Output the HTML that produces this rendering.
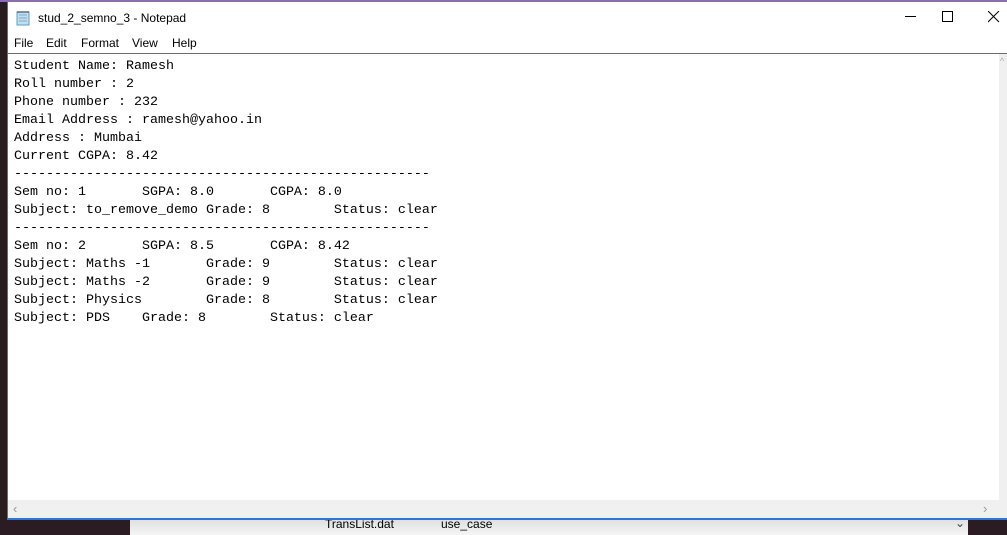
<!DOCTYPE html><html><head><style>
body{margin:0;width:1007px;height:535px;overflow:hidden;background:#2a1c22;position:relative;font-family:"Liberation Sans",sans-serif}
.win{position:absolute;left:7px;top:2px;width:1000px;height:516px;background:#fff;border-left:1px solid #2b78d8;border-bottom:2px solid #2b78d8}
.topline{position:absolute;left:0;top:0;width:1007px;height:2px;background:#8a6fb0}
.title{position:absolute;left:30px;top:9px;font-size:12px;color:#000}
.menu{position:absolute;top:34px;font-size:12px;color:#000}
.sep{position:absolute;left:0;top:51px;width:1000px;height:1px;background:#2b78d8}
pre{position:absolute;left:6px;top:56px;margin:0;font-family:"Liberation Mono",monospace;font-size:13.33px;line-height:18px;color:#000}
.vs{position:absolute;left:991px;top:52px;width:9px;height:447px;background:#f0f0f0}
.hs{position:absolute;left:0;top:498px;width:1000px;height:18px;background:#f0f0f0}
.exp{position:absolute;left:130px;top:520px;width:838px;height:15px;background:linear-gradient(#e0e0e0,#f5f5f5);font-size:12px}
</style></head><body>
<div class="topline"></div>
<div class="exp"><span style="position:absolute;left:195px;top:-3px">TransList.dat</span><span style="position:absolute;left:311px;top:-3px">use_case</span><span style="position:absolute;left:825px;top:-4px;color:#444">⌄</span></div>
<div class="win">
<svg style="position:absolute;left:8px;top:8px" width="14" height="16"><rect x="1" y="2" width="12" height="13" fill="#bfe0f2" stroke="#6a9ab8"/><path d="M3 5h8M3 8h8M3 11h8" stroke="#8ab"/><path d="M2 1v2M4 1v2M6 1v2M8 1v2M10 1v2M12 1v2" stroke="#557"/></svg>
<div class="title">stud_2_semno_3 - Notepad</div>
<svg style="position:absolute;left:897px;top:14px" width="12" height="2"><rect width="11" height="1" fill="#000"/></svg>
<svg style="position:absolute;left:934px;top:9px" width="12" height="12"><rect x="0.5" y="0.5" width="10" height="10" fill="none" stroke="#000"/></svg>
<svg style="position:absolute;left:980px;top:9px" width="12" height="12"><path d="M0 0L11 11M11 0L0 11" stroke="#000"/></svg>
<span class="menu" style="left:6px">File</span><span class="menu" style="left:38px">Edit</span><span class="menu" style="left:73px">Format</span><span class="menu" style="left:124px">View</span><span class="menu" style="left:164px">Help</span>
<div class="sep"></div>
<pre>Student Name: Ramesh
Roll number : 2
Phone number : 232
Email Address : ramesh@yahoo.in
Address : Mumbai
Current CGPA: 8.42
----------------------------------------------------
Sem no: 1       SGPA: 8.0       CGPA: 8.0
Subject: to_remove_demo Grade: 8        Status: clear
----------------------------------------------------
Sem no: 2       SGPA: 8.5       CGPA: 8.42
Subject: Maths -1       Grade: 9        Status: clear
Subject: Maths -2       Grade: 9        Status: clear
Subject: Physics        Grade: 8        Status: clear
Subject: PDS    Grade: 8        Status: clear</pre>
<div class="vs"><span style="position:absolute;left:1px;top:2px;color:#aaa;font-size:9px">^</span></div>
<div class="hs"><span style="position:absolute;left:5px;top:1px;color:#999;font-size:13px">‹</span><span style="position:absolute;left:975px;top:1px;color:#999;font-size:13px">›</span></div>
</div>
</body></html>
